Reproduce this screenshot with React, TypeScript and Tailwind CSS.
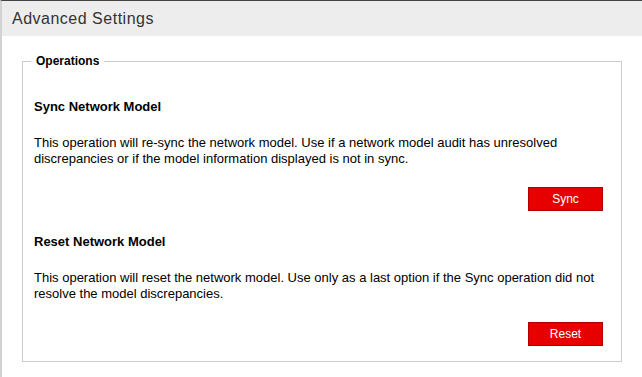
export default function App() {
  return (
    <div className="min-h-[377px] w-[642px] border-t border-l-2 border-t-[#444444] border-l-[#d2d2d2] bg-white font-['Liberation_Sans',Arial,sans-serif] text-black">
      <div className="flex h-[35px] items-center bg-[#ededed] pl-[10px]">
        <h1 className="text-[16px] leading-none tracking-[0.5px] text-[#333333]">Advanced Settings</h1>
      </div>

      <div className="pl-[20px] pr-[20px] pt-[18px]">
        <fieldset className="m-0 w-[600px] border border-[#cccccc] p-0">
          <legend className="ml-[8px] px-[5px] text-[12px] font-bold leading-[14px]">Operations</legend>

          <div className="pl-[11px] pr-[18px] pb-[15px]">
            <section className="pt-[31px]">
              <h2 className="text-[13px] font-bold leading-[16px]">Sync Network Model</h2>
              <p className="mt-[20px] text-[13px] leading-[16px]">
                This operation will re-sync the network model. Use if a network model audit has unresolved
                discrepancies or if the model information displayed is not in sync.
              </p>
              <div className="mt-[20px] flex justify-end">
                <button
                  type="button"
                  className="h-[24px] w-[75px] border border-[#b00000] bg-[#e60000] text-[12px] text-white"
                >
                  Sync
                </button>
              </div>
            </section>

            <section className="pt-[23px]">
              <h2 className="text-[13px] font-bold leading-[16px]">Reset Network Model</h2>
              <p className="mt-[20px] text-[13px] leading-[16px]">
                This operation will reset the network model. Use only as a last option if the Sync operation did not
                resolve the model discrepancies.
              </p>
              <div className="mt-[20px] flex justify-end">
                <button
                  type="button"
                  className="h-[24px] w-[75px] border border-[#b00000] bg-[#e60000] text-[12px] text-white"
                >
                  Reset
                </button>
              </div>
            </section>
          </div>
        </fieldset>
      </div>
    </div>
  );
}
